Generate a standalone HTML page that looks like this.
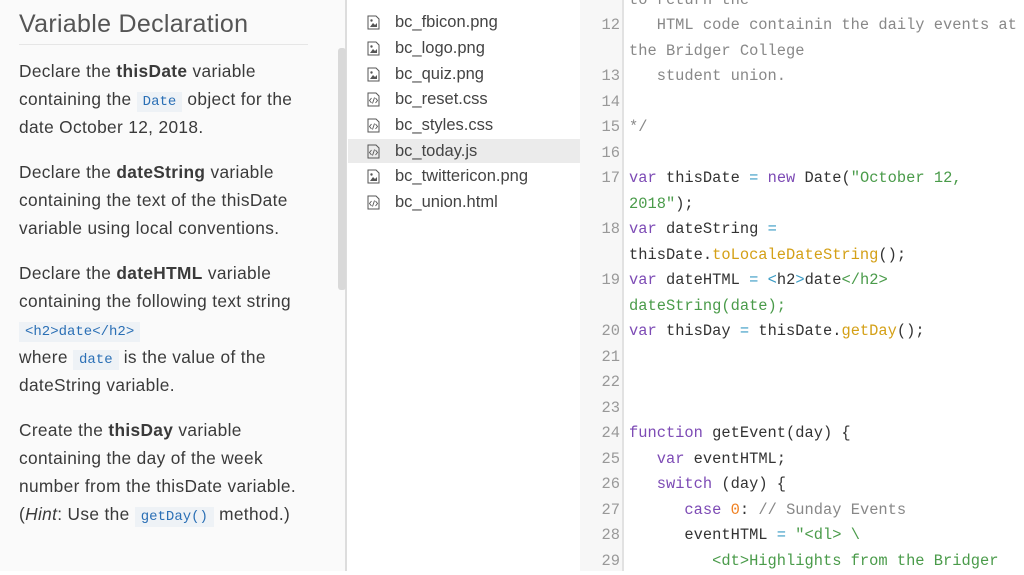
<!DOCTYPE html>
<html><head><meta charset="utf-8"><style>
*{margin:0;padding:0;box-sizing:border-box}
body{width:1024px;height:571px;overflow:hidden;background:#fff;position:relative;font-family:"Liberation Sans",sans-serif;color:#333}
#left{position:absolute;left:0;top:0;width:347px;height:571px;background:#fafafa;border-right:2px solid #ddd}
#left h1{position:absolute;left:19px;top:9px;font-size:25px;font-weight:normal;color:#555;width:289px;border-bottom:1px solid #e6e6e6;padding-bottom:5px;line-height:30px;letter-spacing:.3px}
#left .txt{position:absolute;left:19px;top:57px;width:330px;font-size:17.3px;line-height:28px;color:#3a3a3a;letter-spacing:.35px;white-space:nowrap}
#left p{margin-bottom:17px}
code{font-family:"Liberation Mono",monospace;font-size:14px;color:#2a6fb5;background:#eef2f6;padding:2px 6px;letter-spacing:0;line-height:18px}
#sb{position:absolute;left:338px;top:48px;width:8px;height:242px;background:#d9d9d9;border-radius:3px}
#files{position:absolute;left:348px;top:0;width:232px;height:571px;background:#fff}
.f{position:absolute;left:0;width:232px;height:24px;font-size:16.5px;line-height:24px;padding-left:47px;color:#444}
.f.sel{background:#ebebeb}
.f svg{position:absolute;left:19px;top:5px}
#gut{position:absolute;left:580px;top:0;width:44px;height:571px;background:#f7f7f7;border-right:2px solid #e2e2e2}
#code{position:absolute;left:0;top:2px}
.ln{position:absolute;left:580px;width:40px;text-align:right;font-family:"Liberation Mono",monospace;font-size:15.4px;color:#999;height:25.5px;line-height:25.5px}
.cl{position:absolute;left:629px;font-family:"Liberation Mono",monospace;font-size:15.4px;color:#333;white-space:pre;height:25.5px;line-height:25.5px}
.k{color:#7d4bb5}.s{color:#4a9b4a}.o{color:#3a9bc4}.fn{color:#d4a017}.c{color:#888}.n{color:#f08020}
</style></head><body>
<div id="left">
<h1>Variable Declaration</h1>
<div class="txt">
<p>Declare the <b>thisDate</b> variable<br>containing the <code>Date</code> object for the<br>date October 12, 2018.</p>
<p>Declare the <b>dateString</b> variable<br>containing the text of the thisDate<br>variable using local conventions.</p>
<p>Declare the <b>dateHTML</b> variable<br>containing the following text string<br><code>&lt;h2&gt;date&lt;/h2&gt;</code><br>where <code>date</code> is the value of the<br>dateString variable.</p>
<p>Create the <b>thisDay</b> variable<br>containing the day of the week<br>number from the thisDate variable.<br>(<i>Hint</i>: Use the <code>getDay()</code> method.)</p>
</div>
<div id="sb"></div>
</div>
<div id="files">
<div class="f" style="top:10px"><svg width="13" height="15"><path d="M1 1h8l3 3v10H1z" fill="none" stroke="#555"/><path d="M3 12l3-4 2 2 2-2v4z" fill="#555"/><circle cx="4.5" cy="5.5" r="1.2" fill="#555"/></svg>bc_fbicon.png</div>
<div class="f" style="top:36px"><svg width="13" height="15"><path d="M1 1h8l3 3v10H1z" fill="none" stroke="#555"/><path d="M3 12l3-4 2 2 2-2v4z" fill="#555"/><circle cx="4.5" cy="5.5" r="1.2" fill="#555"/></svg>bc_logo.png</div>
<div class="f" style="top:62px"><svg width="13" height="15"><path d="M1 1h8l3 3v10H1z" fill="none" stroke="#555"/><path d="M3 12l3-4 2 2 2-2v4z" fill="#555"/><circle cx="4.5" cy="5.5" r="1.2" fill="#555"/></svg>bc_quiz.png</div>
<div class="f" style="top:87px"><svg width="13" height="15"><path d="M1 1h8l3 3v10H1z" fill="none" stroke="#555"/><path d="M4.5 6l-2 2.5 2 2.5M8.5 6l2 2.5-2 2.5M7.5 5.5l-2 6" fill="none" stroke="#555" stroke-width=".9"/></svg>bc_reset.css</div>
<div class="f" style="top:113px"><svg width="13" height="15"><path d="M1 1h8l3 3v10H1z" fill="none" stroke="#555"/><path d="M4.5 6l-2 2.5 2 2.5M8.5 6l2 2.5-2 2.5M7.5 5.5l-2 6" fill="none" stroke="#555" stroke-width=".9"/></svg>bc_styles.css</div>
<div class="f sel" style="top:139px"><svg width="13" height="15"><path d="M1 1h8l3 3v10H1z" fill="none" stroke="#555"/><path d="M4.5 6l-2 2.5 2 2.5M8.5 6l2 2.5-2 2.5M7.5 5.5l-2 6" fill="none" stroke="#555" stroke-width=".9"/></svg>bc_today.js</div>
<div class="f" style="top:164px"><svg width="13" height="15"><path d="M1 1h8l3 3v10H1z" fill="none" stroke="#555"/><path d="M3 12l3-4 2 2 2-2v4z" fill="#555"/><circle cx="4.5" cy="5.5" r="1.2" fill="#555"/></svg>bc_twittericon.png</div>
<div class="f" style="top:190px"><svg width="13" height="15"><path d="M1 1h8l3 3v10H1z" fill="none" stroke="#555"/><path d="M4.5 6l-2 2.5 2 2.5M8.5 6l2 2.5-2 2.5M7.5 5.5l-2 6" fill="none" stroke="#555" stroke-width=".9"/></svg>bc_union.html</div>
</div>
<div id="gut"></div>
<div id="code">
<div class="cl c" style="top:-14px">to return the</div>
<div class="ln" style="top:11px">12</div><div class="cl c" style="top:11px">   HTML code containin the daily events at</div>
<div class="cl c" style="top:37px">the Bridger College</div>
<div class="ln" style="top:62px">13</div><div class="cl c" style="top:62px">   student union.</div>
<div class="ln" style="top:88px">14</div>
<div class="ln" style="top:113px">15</div><div class="cl c" style="top:113px">*/</div>
<div class="ln" style="top:139px">16</div>
<div class="ln" style="top:164px">17</div><div class="cl" style="top:164px"><span class="k">var</span> thisDate <span class="o">=</span> <span class="k">new</span> Date(<span class="s">"October 12,</span></div>
<div class="cl" style="top:190px"><span class="s">2018"</span>);</div>
<div class="ln" style="top:215px">18</div><div class="cl" style="top:215px"><span class="k">var</span> dateString <span class="o">=</span></div>
<div class="cl" style="top:241px">thisDate.<span class="fn">toLocaleDateString</span>();</div>
<div class="ln" style="top:266px">19</div><div class="cl" style="top:266px"><span class="k">var</span> dateHTML <span class="o">=</span> <span class="o">&lt;</span>h2<span class="o">&gt;</span>date<span class="s">&lt;/h2&gt;</span></div>
<div class="cl s" style="top:292px">dateString(date);</div>
<div class="ln" style="top:317px">20</div><div class="cl" style="top:317px"><span class="k">var</span> thisDay <span class="o">=</span> thisDate.<span class="fn">getDay</span>();</div>
<div class="ln" style="top:343px">21</div>
<div class="ln" style="top:368px">22</div>
<div class="ln" style="top:394px">23</div>
<div class="ln" style="top:419px">24</div><div class="cl" style="top:419px"><span class="k">function</span> getEvent(day) {</div>
<div class="ln" style="top:445px">25</div><div class="cl" style="top:445px">   <span class="k">var</span> eventHTML;</div>
<div class="ln" style="top:470px">26</div><div class="cl" style="top:470px">   <span class="k">switch</span> (day) {</div>
<div class="ln" style="top:496px">27</div><div class="cl" style="top:496px">      <span class="k">case</span> <span class="n">0</span>: <span class="c">// Sunday Events</span></div>
<div class="ln" style="top:521px">28</div><div class="cl" style="top:521px">      eventHTML <span class="o">=</span> <span class="s">"&lt;dl&gt; \</span></div>
<div class="ln" style="top:547px">29</div><div class="cl s" style="top:547px">         &lt;dt&gt;Highlights from the Bridger</div>
</div>
</body></html>
